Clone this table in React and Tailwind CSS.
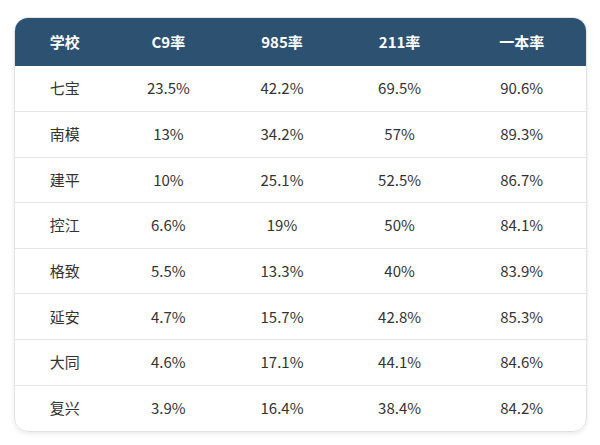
import React from 'react';

const rows = [
  ['七宝', '23.5%', '42.2%', '69.5%', '90.6%'],
  ['南模', '13%', '34.2%', '57%', '89.3%'],
  ['建平', '10%', '25.1%', '52.5%', '86.7%'],
  ['控江', '6.6%', '19%', '50%', '84.1%'],
  ['格致', '5.5%', '13.3%', '40%', '83.9%'],
  ['延安', '4.7%', '15.7%', '42.8%', '85.3%'],
  ['大同', '4.6%', '17.1%', '44.1%', '84.6%'],
  ['复兴', '3.9%', '16.4%', '38.4%', '84.2%'],
];

const headers = ['学校', 'C9率', '985率', '211率', '一本率'];
const widths = ['w-[100px]', 'w-[108px]', 'w-[120px]', 'w-[116px]', 'w-[129px]'];

export default function App() {
  return (
    <div className="w-[600px] h-[445px] bg-white pt-[17px] pl-[14px] font-['Noto_Sans_CJK_SC',sans-serif]">
      <div className="w-[573px] rounded-[14px] overflow-hidden border border-[#e3e3e3] shadow-[0_2px_4px_rgba(0,0,0,0.08)]">
        <table className="w-full border-collapse text-[15px]">
          <thead>
            <tr className="bg-[#2c5171] text-white h-[48px]">
              {headers.map((h, i) => (
                <th key={h} className={`${widths[i]} font-bold text-center`}>{h}</th>
              ))}
            </tr>
          </thead>
          <tbody>
            {rows.map((r, ri) => (
              <tr key={r[0]} className={`h-[45.6px] ${ri < rows.length - 1 ? 'border-b border-[#e6e6e6]' : ''}`}>
                {r.map((c, i) => (
                  <td key={i} className="text-center text-[#333333]">{c}</td>
                ))}
              </tr>
            ))}
          </tbody>
        </table>
      </div>
    </div>
  );
}
